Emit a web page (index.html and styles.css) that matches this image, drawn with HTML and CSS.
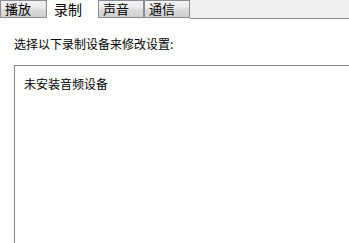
FILE: index.html
```html
<!DOCTYPE html>
<html lang="zh-CN">
<head>
<meta charset="utf-8">
<link rel="stylesheet" href="styles.css">
</head>
<body>
<div class="tabs">
  <div class="tab tab-play">播放</div>
  <div class="tab tab-active">录制</div>
  <div class="tab tab-sound">声音</div>
  <div class="tab tab-comm">通信</div>
  <div class="tab-fill"></div>
</div>
<div class="panel">
  <div class="label">选择以下录制设备来修改设置:</div>
  <div class="listbox">
    <div class="empty">未安装音频设备</div>
  </div>
</div>
</body>
</html>
```
FILE: styles.css
```css
html, body {
  margin: 0;
  padding: 0;
  background: #ffffff;
  overflow: hidden;
  width: 349px;
  height: 243px;
  font-family: "Noto Sans CJK SC", "Microsoft YaHei", sans-serif;
  font-size: 12px;
  color: #000;
}
.tabs {
  display: flex;
  height: 19px;
  align-items: flex-start;
}
.tab {
  box-sizing: border-box;
  height: 18px;
  line-height: 15px;
  padding-left: 4px;
  border: 1px solid #898c95;
  background: linear-gradient(#f2f2f2, #ebebeb 45%, #dddddd 50%, #cfcfcf);
  font-size: 13px;
}
.tab-play { width: 47px; }
.tab-active {
  width: 51px;
  height: 19px;
  border: 0;
  background: #ffffff;
  padding-left: 7px;
  line-height: 18px;
  font-size: 14px;
}
.tab-sound { width: 46px; }
.tab-comm { width: 46px; }
.tab-fill {
  flex: 1;
  height: 19px;
  box-sizing: border-box;
  background: #f0f0f0;
  border-bottom: 1px solid #898c95;
}
.panel {
  padding: 17px 0 0 14px;
}
.label {
  line-height: 16px;
}
.listbox {
  box-sizing: border-box;
  margin-top: 13px;
  border-top: 1px solid #828790;
  border-left: 1px solid #828790;
  height: 178px;
  padding: 10px 0 0 9px;
}
.empty {
  line-height: 16px;
}
```
